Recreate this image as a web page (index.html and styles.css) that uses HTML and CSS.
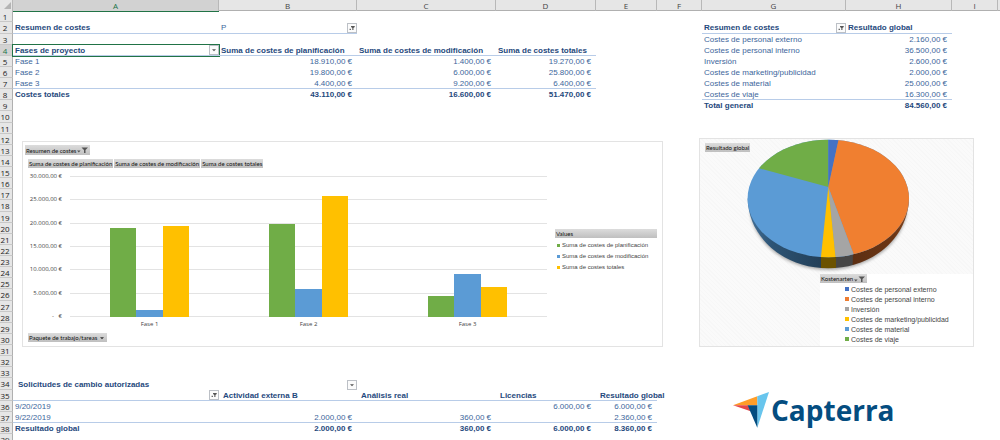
FILE: index.html
```html
<!DOCTYPE html>
<html lang="es">
<head>
<meta charset="utf-8">
<title>Resumen de costes</title>
<link rel="stylesheet" href="styles.css">
</head>
<body>
<svg class="defs" aria-hidden="true">
  <symbol id="filter" viewBox="0 0 10 10"><path d="M2 6h1.600v1.400H2zM3.800 2.400h4.600v1.200L6.800 5v2.600H5.400V5L3.800 3.600z"/></symbol>
  <symbol id="arrow" viewBox="0 0 10 10"><path d="M2.500 4h5L5 6.700z"/></symbol>
  <symbol id="sorted" viewBox="0 0 12 8"><path d="M0 4.600h3.600L1.800 6.600zM4.500 1.500h6.500L8.500 4V7H7V4z"/></symbol>
</svg>
<main class="sheet">
  <div class="corner"><svg viewBox="0 0 13 10"><path d="M11 2v7H4z"/></svg></div>
  <div class="columns grid">
    <span class="active">A</span><span>B</span><span>C</span><span>D</span><span>E</span><span>F</span><span>G</span><span>H</span><span>I</span>
  </div>
  <ol class="rows">
    <li>1</li><li>2</li><li>3</li><li class="active">4</li><li>5</li><li>6</li><li>7</li><li>8</li><li>9</li><li>10</li>
    <li>11</li><li>12</li><li>13</li><li>14</li><li>15</li><li>16</li><li>17</li><li>18</li><li>19</li><li>20</li>
    <li>21</li><li>22</li><li>23</li><li>24</li><li>25</li><li>26</li><li>27</li><li>28</li><li>29</li><li>30</li>
    <li>31</li><li>32</li><li>33</li><li>34</li><li>35</li><li>36</li><li>37</li><li>38</li><li>39</li>
  </ol>
  <div class="canvas">
    <section class="grid top">
      <table class="pivot phases">
        <tbody>
          <tr class="ruled tall short-rule"><th>Resumen de costes</th><td class="with-button">P <button class="drop" aria-label="Filtrar"><svg><use href="#filter"/></svg></button></td><td></td><td></td></tr>
          <tr><td></td><td></td><td></td><td></td></tr>
          <tr class="ruled"><th class="with-button selected">Fases de proyecto <button class="drop" aria-label="Desplegar fases"><svg><use href="#arrow"/></svg></button></th><th>Suma de costes de planificación</th><th>Suma de costes de modificación</th><th>Suma de costes totales</th></tr>
          <tr><td>Fase 1</td><td class="num">18.910,00 €</td><td class="num">1.400,00 €</td><td class="num">19.270,00 €</td></tr>
          <tr><td>Fase 2</td><td class="num">19.800,00 €</td><td class="num">6.000,00 €</td><td class="num">25.800,00 €</td></tr>
          <tr class="ruled"><td>Fase 3</td><td class="num">4.400,00 €</td><td class="num">9.200,00 €</td><td class="num">6.400,00 €</td></tr>
          <tr><th>Costes totales</th><th class="num">43.110,00 €</th><th class="num">16.600,00 €</th><th class="num">51.470,00 €</th></tr>
        </tbody>
      </table>
      <table class="pivot kinds">
        <tbody>
          <tr class="ruled tall"><th class="with-button">Resumen de costes <button class="drop" aria-label="Filtrar costes"><svg><use href="#filter"/></svg></button></th><th>Resultado global</th></tr>
          <tr><td>Costes de personal externo</td><td class="num">2.160,00 €</td></tr>
          <tr><td>Costes de personal interno</td><td class="num">36.500,00 €</td></tr>
          <tr><td>Inversión</td><td class="num">2.600,00 €</td></tr>
          <tr><td>Costes de marketing/publicidad</td><td class="num">2.000,00 €</td></tr>
          <tr><td>Costes de material</td><td class="num">25.000,00 €</td></tr>
          <tr class="ruled"><td>Costes de viaje</td><td class="num">16.300,00 €</td></tr>
          <tr><th>Total general</th><th class="num">84.560,00 €</th></tr>
        </tbody>
      </table>
    </section>

    <section class="charts">
      <figure class="chart bar-chart">
        <div class="bar-main">
          <button class="field">Resumen de costes <svg class="sorted"><use href="#sorted"/></svg></button>
          <div class="fields">
            <button class="field">Suma de costes de planificación</button>
            <button class="field">Suma de costes de modificación</button>
            <button class="field">Suma de costes totales</button>
          </div>
          <div class="plot">
            <div class="axis"><span>30.000,00 €</span><span>25.000,00 €</span><span>20.000,00 €</span><span>15.000,00 €</span><span>10.000,00 €</span><span>5.000,00 €</span><span>-&nbsp;&nbsp; €</span></div>
            <div class="lines"><i></i><i></i><i></i><i></i><i></i><i></i><i></i></div>
            <div class="bars">
              <div class="group"><b class="green" style="height:63.03%"></b><b class="blue" style="height:4.67%"></b><b class="yellow" style="height:64.23%"></b></div>
              <div class="group"><b class="green" style="height:66%"></b><b class="blue" style="height:20%"></b><b class="yellow" style="height:86%"></b></div>
              <div class="group"><b class="green" style="height:14.67%"></b><b class="blue" style="height:30.67%"></b><b class="yellow" style="height:21.33%"></b></div>
            </div>
            <div class="categories"><span>Fase 1</span><span>Fase 2</span><span>Fase 3</span></div>
          </div>
          <div class="fields"><button class="field">Paquete de trabajo/tareas <svg class="caret"><use href="#arrow"/></svg></button></div>
        </div>
        <div class="bar-legend">
          <button class="field">Values</button>
          <ul>
            <li><i class="green"></i>Suma de costes de planificación</li>
            <li><i class="blue"></i>Suma de costes de modificación</li>
            <li><i class="yellow"></i>Suma de costes totales</li>
          </ul>
        </div>
      </figure>

      <figure class="chart pie-chart">
        <svg class="pie" viewBox="740 139 177 135" role="img" aria-label="Resultado global por tipo de coste">
          <defs>
            <linearGradient id="sideBlue"><stop offset="0" stop-color="#47749d"/><stop offset=".35" stop-color="#2d5475"/><stop offset="1" stop-color="#233f58"/></linearGradient>
            <linearGradient id="sideOrange"><stop offset="0" stop-color="#5c2f13"/><stop offset=".7" stop-color="#6b3514"/><stop offset="1" stop-color="#8a4a20"/></linearGradient>
            <filter id="shade" x="-10%" y="-10%" width="120%" height="130%"><feGaussianBlur stdDeviation="1.5"/></filter>
            <clipPath id="face"><ellipse cx="828.300" cy="198.500" rx="80.700" ry="58.800"/></clipPath>
            <clipPath id="side"><path d="M747.600 198.500C748.500 238 784 268.300 828.300 268.300S908 238 909 198.500z"/></clipPath>
          </defs>
          <path d="M750 212C755 245 788 270 828.300 270S902 245 907 212z" fill="#777" opacity=".6" filter="url(#shade)"/>
          <g clip-path="url(#side)">
            <path fill="url(#sideBlue)" d="M745 190h76v82h-76z"/>
            <path fill="#6b5200" d="M821 190h15v82h-15z"/>
            <path fill="#464646" d="M836 190h19l-2 82h-17z"/>
            <path fill="url(#sideOrange)" d="M854.500 190H912v82h-59.500z"/>
          </g>
          <g clip-path="url(#face)">
            <path fill="#5b9bd5" d="M740 135h177v130H740z"/>
            <path fill="#70ad47" d="M828.300 187L759 168.300L740 163V130h88.300z"/>
            <path fill="#4472c4" d="M828.300 187V130h12.600z"/>
            <path fill="#f07f30" d="M828.300 187L840.600 130H917v140h-57.500z"/>
            <path fill="#a5a5a5" d="M828.300 187L859.500 270h-22.600z"/>
            <path fill="#ffc000" d="M828.300 187L836.900 270h-17.300z"/>
          </g>
        </svg>
        <button class="field pie-label">Resultado global</button>
        <div class="pie-legend">
          <button class="field">Kostenarten <svg class="sorted"><use href="#sorted"/></svg></button>
          <ul>
            <li><i class="navy"></i>Costes de personal externo</li>
            <li><i class="orange"></i>Costes de personal interno</li>
            <li><i class="gray"></i>Inversión</li>
            <li><i class="yellow"></i>Costes de marketing/publicidad</li>
            <li><i class="blue"></i>Costes de material</li>
            <li><i class="green"></i>Costes de viaje</li>
          </ul>
        </div>
      </figure>
    </section>

    <section class="grid bottom">
      <table class="pivot changes">
        <tbody>
          <tr class="title"><th>Solicitudes de cambio autorizadas</th><td class="with-button"><button class="drop" aria-label="Desplegar solicitudes"><svg><use href="#arrow"/></svg></button></td><td></td><td></td><td></td></tr>
          <tr class="ruled heads"><th class="with-button"><button class="drop" aria-label="Filtrar fechas"><svg><use href="#filter"/></svg></button></th><th>Actividad externa B</th><th>Análisis real</th><th>Licencias</th><th>Resultado global</th></tr>
          <tr><td>9/20/2019</td><td></td><td></td><td class="num">6.000,00 €</td><td class="num">6.000,00 €</td></tr>
          <tr class="ruled"><td>9/22/2019</td><td class="num">2.000,00 €</td><td class="num">360,00 €</td><td></td><td class="num">2.360,00 €</td></tr>
          <tr><th>Resultado global</th><th class="num">2.000,00 €</th><th class="num">360,00 €</th><th class="num">6.000,00 €</th><th class="num">8.360,00 €</th></tr>
        </tbody>
      </table>
      <div class="brand">
        <svg viewBox="0 0 36 36" aria-hidden="true">
          <path fill="#ff9d28" d="M0 13.300L24.300 4.200v9.100z"/>
          <path fill="#68c5ed" d="M24.300 4.200L36 0L24.300 35.800z"/>
          <path fill="#e54747" d="M0 13.300h15l2.700 6z"/>
          <path fill="#044d80" d="M14.600 13.300h9.700v22.500z"/>
        </svg>
        <span>Capterra</span>
      </div>
    </section>
  </div>
</main>
</body>
</html>
```
FILE: styles.css
```css
* { box-sizing: border-box; }

body {
  margin: 0;
  background: #fff;
  font: 8px/11px "Liberation Sans", Arial, sans-serif;
  color: #3d669b;
}

.defs { display: none; }
button { font: inherit; color: inherit; margin: 0; padding: 0; }
ol, ul { list-style: none; margin: 0; padding: 0; }

.sheet {
  display: grid;
  grid-template: 11px 1fr / 13px minmax(0, 1fr);
  height: 100vh;
  overflow: hidden;
}

.grid {
  display: grid;
  grid-template-columns:
    minmax(0, 206fr) minmax(0, 138fr) minmax(0, 139fr) minmax(0, 100fr) minmax(0, 61fr)
    minmax(0, 45fr) minmax(0, 144fr) minmax(0, 106fr) minmax(0, 46fr) minmax(0, 2fr);
}

/* Sheet headings */
.corner, .columns, .rows li { background: #e6e6e6; }
.corner { border-right: 1px solid #b8b8b8; }
.corner svg { display: block; height: 10px; width: 13px; fill: #b4b4b4; }
.columns, .rows { font-family: "Open Sans", sans-serif; color: #444; text-align: center; }
.columns { border-bottom: 1px solid #b0b0b0; line-height: 11px; }
.columns span { border-right: 1px solid #b8b8b8; }
.columns .active { background: #d2d2d2; color: #217346; box-shadow: 0 1px #217346; }
.rows li {
  height: 11px;
  line-height: 11px;
  padding-right: 2px;
  color: #222;
  border-right: 1px solid #b0b0b0;
  border-bottom: 1px solid #c8c8c8;
}
.rows li:nth-child(8n+2) { height: 12px; }
.rows .active { background: #d2d2d2; color: #217346; border-right-color: #217346; }

/* Pivot tables */
.canvas { min-width: 0; }
.top { padding-top: 11px; height: 127px; align-items: start; }
.pivot, .pivot tr { display: grid; grid-template-columns: subgrid; }
.pivot tbody { display: contents; }
.pivot tr { grid-column: 1 / -1; }
.phases { grid-column: 1 / 5; }
.kinds { grid-column: 7 / 9; }
.changes { grid-column: 1 / 6; }
.pivot td, .pivot th {
  height: 11px;
  line-height: 11px;
  padding: 0 5px 0 2px;
  white-space: nowrap;
  text-align: left;
}
.pivot th { color: #1f497d; }
.pivot .tall > * { height: 12px; }
.pivot .ruled > * { border-bottom: 1px solid #b8cce8; }
.pivot .short-rule > :nth-child(n+3) { border-bottom: 0; }
.pivot .num { text-align: right; }
.pivot .title th { padding-left: 5px; }
.pivot .heads th { padding-left: 4px; }
.pivot .with-button { display: flex; align-items: center; justify-content: space-between; padding-right: 0; }
.pivot .with-button > :only-child { margin-left: auto; }
.pivot td.with-button > .drop:only-child, .pivot th.with-button > .drop { margin-left: auto; }
.pivot .selected { outline: 1px solid #217346; }
.drop {
  width: 10px;
  height: 10px;
  flex: none;
  border: 1px solid #bcc0c6;
  background: #fbfbfb;
}
.drop svg { display: block; width: 8px; height: 8px; fill: #555; }

/* Charts */
.charts {
  display: grid;
  grid-template-columns: 641fr 275fr;
  column-gap: 36px;
  align-items: end;
  padding: 0 26px 0 9px;
  font-size: 6px;
  line-height: 9px;
  color: #444;
}
.chart { margin: 0; border: 1px solid #e3e3e3; }
.field {
  display: inline-flex;
  align-items: center;
  gap: 1px;
  height: 9px;
  padding: 0 1px;
  border: 0;
  background: linear-gradient(#dcdcdc, #bfbfbf);
  color: #111;
  font: 6px/9px Lato, sans-serif;
  white-space: nowrap;
}
.sorted { width: 12px; height: 8px; fill: #555; }
.caret { width: 8px; height: 8px; fill: #333; }
.green { background: #70ad47; }
.blue { background: #5b9bd5; }
.yellow { background: #ffc000; }
.navy { background: #4472c4; }
.orange { background: #ed7d31; }
.gray { background: #a5a5a5; }

.bar-chart {
  display: grid;
  grid-template-columns: minmax(0, 1fr) 102px;
  column-gap: 8px;
  height: 206px;
  padding: 3px 5px 0 2px;
}
.bar-main { display: flex; flex-direction: column; align-items: start; }
.bar-main > .field { height: 10px; }
.fields { display: flex; gap: 1px; padding: 4px 0 0 3px; }
.plot {
  align-self: stretch;
  display: grid;
  grid-template: 141px 12px / 34px minmax(0, 1fr);
  column-gap: 8px;
  padding: 8px 0 0 3px;
  font-family: "Open Sans", sans-serif;
}
.axis { display: flex; flex-direction: column; justify-content: space-between; margin: -4px 0; text-align: right; }
.lines, .bars { grid-area: 1 / 2; }
.lines { display: flex; flex-direction: column; justify-content: space-between; }
.lines i { height: 1px; background: #e3e3e3; }
.bars, .categories { display: grid; grid-template-columns: repeat(3, 1fr); }
.group { display: grid; grid-template-columns: repeat(3, 1fr); align-items: end; padding: 0 25%; }
.categories { grid-area: 2 / 2; padding-top: 3px; text-align: center; }
.bar-legend { padding-top: 84px; }
.bar-legend .field { width: 100%; justify-content: flex-start; }
.bar-legend li, .pie-legend li { display: flex; align-items: center; white-space: nowrap; }
.bar-legend ul { padding: 1px 0 0 2px; }
.bar-legend li { height: 11px; gap: 2px; }
.bar-legend i { width: 3px; height: 3px; }

.pie-chart {
  display: grid;
  grid-template: 135px 72px / minmax(0, 1fr);
  height: 209px;
  background: repeating-linear-gradient(45deg, #f7f7f7 0 1px, #fafafa 1px 3px);
}
.pie { grid-area: 1 / 1; width: 100%; height: 135px; padding-right: 16px; }
.pie-label { grid-area: 1 / 1; justify-self: start; margin: 4px 5px; }
.pie-legend { justify-self: end; width: 153px; background: #fff; font-size: 7px; }
.pie-legend .field { display: flex; }
.pie-legend ul { padding: 1px 0 0 25px; }
.pie-legend li { height: 10px; gap: 2px; }
.pie-legend i { width: 4px; height: 4px; }

/* Change requests and brand */
.bottom { padding-top: 32px; align-items: start; }
.brand {
  grid-column: 7 / 10;
  display: flex;
  align-items: flex-start;
  gap: 2px;
  padding: 13px 0 0 31px;
  color: #044d80;
}
.brand svg { width: 36px; height: 36px; }
.brand span { font: bold 28px/36px "Open Sans", sans-serif; }
```
